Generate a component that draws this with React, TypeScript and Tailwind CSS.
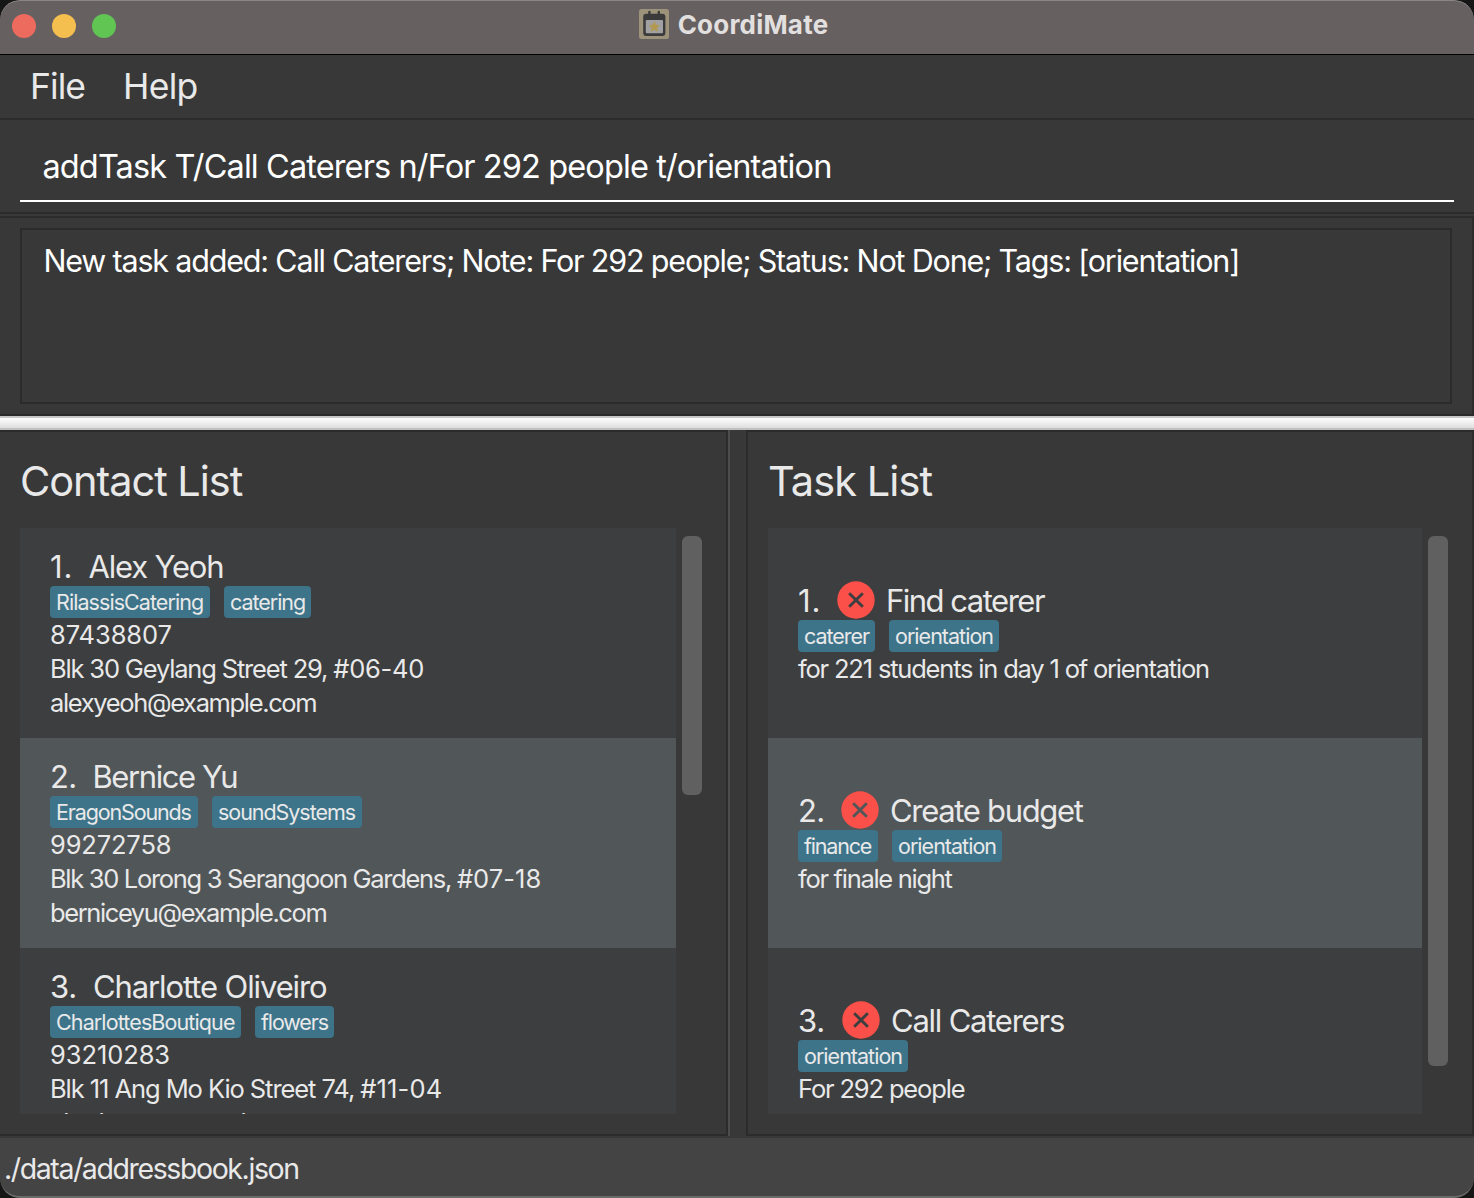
type Chip = { text: string; className: string; unit?: Chip }

type Contact = {
  index: Chip
  name: Chip
  tags: Chip[]
  lines: Chip[]
}

type Task = {
  index: Chip
  title: Chip
  tags: Chip[]
  note: Chip
}

const contacts: Contact[] = [
  {
    index: { text: '1.', className: 'w-[38.5px] tracking-[0.9px]' },
    name: { text: 'Alex Yeoh', className: 'tracking-[-1.2px]' },
    tags: [
      { text: 'RilassisCatering', className: 'w-[160px] tracking-[-0.94px]' },
      { text: 'catering', className: 'w-[87px] tracking-[-1.04px]' },
    ],
    lines: [
      { text: '87438807', className: 'tracking-[-0.08px]' },
      {
        text: 'Blk 30 Geylang Street 29, ',
        className: 'tracking-[-1.17px]',
        unit: { text: '#06-40', className: 'tracking-[-0.22px]' },
      },
      { text: 'alexyeoh@example.com', className: 'tracking-[-1.36px]' },
    ],
  },
  {
    index: { text: '2.', className: 'w-[42.5px] tracking-[-0.7px]' },
    name: { text: 'Bernice Yu', className: 'tracking-[-1.42px]' },
    tags: [
      { text: 'EragonSounds', className: 'w-[148px] tracking-[-1.14px]' },
      { text: 'soundSystems', className: 'w-[150px] tracking-[-1.05px]' },
    ],
    lines: [
      { text: '99272758', className: 'tracking-[-0.16px]' },
      {
        text: 'Blk 30 Lorong 3 Serangoon Gardens, ',
        className: 'tracking-[-1.31px]',
        unit: { text: '#07-18', className: 'tracking-[0.05px]' },
      },
      { text: 'berniceyu@example.com', className: 'tracking-[-1.4px]' },
    ],
  },
  {
    index: { text: '3.', className: 'w-[43px] tracking-[-0.3px]' },
    name: { text: 'Charlotte Oliveiro', className: 'tracking-[-1.11px]' },
    tags: [
      { text: 'CharlottesBoutique', className: 'w-[191px] tracking-[-0.89px]' },
      { text: 'flowers', className: 'w-[79px] tracking-[-1.14px]' },
    ],
    lines: [
      { text: '93210283', className: 'tracking-[-0.08px]' },
      {
        text: 'Blk 11 Ang Mo Kio Street 74, ',
        className: 'tracking-[-1.07px]',
        unit: { text: '#11-04', className: 'tracking-[0.15px]' },
      },
      { text: 'charlotte@example.com', className: 'tracking-[-1.38px]' },
    ],
  },
]

const tasks: Task[] = [
  {
    index: { text: '1.', className: 'w-[39px] tracking-[0.9px]' },
    title: { text: 'Find caterer', className: 'tracking-[-1.5px]' },
    tags: [
      { text: 'caterer', className: 'w-[77px] tracking-[-1.02px]' },
      { text: 'orientation', className: 'w-[110px] tracking-[-0.98px]' },
    ],
    note: { text: 'for 221 students in day 1 of orientation', className: 'tracking-[-1.19px]' },
  },
  {
    index: { text: '2.', className: 'w-[43px] tracking-[-0.7px]' },
    title: { text: 'Create budget', className: 'tracking-[-1.32px]' },
    tags: [
      { text: 'finance', className: 'w-[80px] tracking-[-1.2px]' },
      { text: 'orientation', className: 'w-[110px] tracking-[-0.98px]' },
    ],
    note: { text: 'for finale night', className: 'tracking-[-1.29px]' },
  },
  {
    index: { text: '3.', className: 'w-[44px] tracking-[-0.3px]' },
    title: { text: 'Call Caterers', className: 'tracking-[-1.23px]' },
    tags: [{ text: 'orientation', className: 'w-[110px] tracking-[-0.98px]' }],
    note: { text: 'For 292 people', className: 'tracking-[-1.16px]' },
  },
]

function CalendarIcon() {
  return (
    <svg width="30" height="30" viewBox="0 0 30 30">
      <rect width="30" height="30" rx="2.5" fill="#9c937a" />
      <rect x="4.2" y="4.8" width="22.2" height="22.2" rx="3" fill="#3b3b3b" />
      <rect x="9.2" y="1.8" width="2.4" height="5" rx="1.2" fill="#3b3b3b" />
      <rect x="18.6" y="1.8" width="2.4" height="5" rx="1.2" fill="#3b3b3b" />
      <rect x="6.8" y="11" width="17.2" height="13.2" rx="1" fill="#a1a1a3" />
      <path
        d="M15.4 12.6l1.5 3.4 3.6.4-2.7 2.4.8 3.6-3.2-1.9-3.2 1.9.8-3.6-2.7-2.4 3.6-.4z"
        fill="#b3984f"
        stroke="#b3984f"
        strokeWidth="0.6"
        strokeLinejoin="round"
      />
    </svg>
  )
}

function NotDoneIcon({ cross }: { cross: string }) {
  return (
    <svg width="38" height="38" viewBox="0 0 38 38" className="shrink-0">
      <circle cx="19" cy="19" r="18.7" fill="#fa5049" />
      <path d="M12.2 12.2L25.8 25.8M25.8 12.2L12.2 25.8" stroke={cross} strokeWidth="2.9" />
    </svg>
  )
}

function Tags({ tags }: { tags: Chip[] }) {
  return (
    <div className="flex h-8 gap-[14px]">
      {tags.map((tag) => (
        <span
          key={tag.text}
          className={`h-8 rounded-[4px] bg-[#3e7489] pl-[6px] text-[21.5px] leading-[33px] ${tag.className}`}
        >
          {tag.text}
        </span>
      ))}
    </div>
  )
}

function ContactCell({ contact, selected }: { contact: Contact; selected: boolean }) {
  return (
    <li className={`h-[210px] shrink-0 pt-5 pl-[30px] ${selected ? 'bg-[#515658]' : 'bg-[#3c3e3f]'}`}>
      <div className="mb-px flex text-[31px] leading-[37px]">
        <span className={contact.index.className}>{contact.index.text}</span>
        <span className={contact.name.className}>{contact.name.text}</span>
      </div>
      <Tags tags={contact.tags} />
      {contact.lines.map((line) => (
        <p key={line.text} className={`text-[25.5px] leading-[34px] ${line.className}`}>
          {line.text}
          {line.unit && <span className={line.unit.className}>{line.unit.text}</span>}
        </p>
      ))}
    </li>
  )
}

function TaskCell({ task, selected }: { task: Task; selected: boolean }) {
  return (
    <li className={`h-[210px] shrink-0 pt-[53px] pl-[30px] ${selected ? 'bg-[#515658]' : 'bg-[#3c3e3f]'}`}>
      <div className="mb-px flex h-[38px] items-start text-[31px] leading-[40px]">
        <span className={task.index.className}>{task.index.text}</span>
        <NotDoneIcon cross={selected ? '#515658' : '#3c3e3f'} />
        <span className={`ml-[11px] ${task.title.className}`}>{task.title.text}</span>
      </div>
      <Tags tags={task.tags} />
      <p className={`text-[25.5px] leading-[34px] ${task.note.className}`}>{task.note.text}</p>
    </li>
  )
}

export default function App() {
  return (
    <div className="h-[1198px] w-[1474px] bg-[#161616]">
      <div className="flex h-[1198px] flex-col overflow-hidden rounded-[20px] bg-[#383838] font-['Inter',sans-serif] whitespace-nowrap text-[#e9e9e9]">
        <header className="grid h-[55px] shrink-0 grid-cols-[1fr_auto_1fr] items-start rounded-t-[20px] border-b border-black bg-[#666160] shadow-[inset_0_1px_0_#8a8685]">
          <div className="flex gap-4 pt-[14px] pl-3">
            <span className="size-6 rounded-full bg-[#ed6a5e]" />
            <span className="size-6 rounded-full bg-[#f5bf4f]" />
            <span className="size-6 rounded-full bg-[#61c554]" />
          </div>
          <div className="flex gap-[9px] pt-[9px] pr-[7px]">
            <CalendarIcon />
            <h1 className="text-[26px] leading-8 font-bold tracking-[0.21px] text-[#e2dfdf]">CoordiMate</h1>
          </div>
        </header>

        <nav className="flex h-[65px] shrink-0 border-b-2 border-[#2b2b2b] pl-[30px] text-[35.5px] leading-[64px]">
          <span className="w-[93px] tracking-[-0.95px]">File</span>
          <span className="tracking-[-0.7px]">Help</span>
        </nav>

        <div className="h-[94px] shrink-0 border-b-2 border-[#2b2b2b] px-5 text-white">
          <div className="h-[82px] border-b-2 border-white pt-[13px] pl-[22.5px] text-[32.5px] leading-[68px] tracking-[-0.89px]">
            addTask T/Call Caterers n/For 292 people t/orientation
          </div>
        </div>

        <section className="mt-0.5 h-[200px] shrink-0 border-y-2 border-r-2 border-[#2b2b2b] pt-[10px] pr-5 pl-5 text-white">
          <div className="h-[176px] border-2 border-[#2b2b2b] pl-[21.5px] text-[30.5px] leading-[61px] tracking-[-1.18px]">
            New task added: Call Caterers; Note: For 292 people; Status: Not Done; Tags: [orientation]
          </div>
        </section>

        <div className="h-[14px] shrink-0 border-y-2 border-t-[#c8c8c8] border-b-[#c0c0c0] bg-linear-to-b from-white to-[#dedede]" />

        <main className="flex h-[706px] shrink-0">
          <section className="w-[728px] border-y-2 border-r-2 border-[#2b2b2b] pl-5">
            <h2 className="h-24 text-[41.5px] leading-[98px] tracking-[-1.05px]">Contact List</h2>
            <div className="flex gap-[6px]">
              <ul className="flex h-[586px] w-[656px] flex-col overflow-hidden">
                {contacts.map((contact, i) => (
                  <ContactCell key={contact.name.text} contact={contact} selected={i === 1} />
                ))}
              </ul>
              <div className="mt-2 h-[259px] w-5 rounded-[6px] bg-[#606060]" />
            </div>
          </section>
          <div className="w-[18px] border-l-2 border-[#4d4d4d]" />
          <section className="w-[728px] border-2 border-[#2b2b2b] pl-5">
            <h2 className="h-24 text-[41.5px] leading-[98px] tracking-[-0.92px]">Task List</h2>
            <div className="flex gap-[6px]">
              <ul className="flex h-[586px] w-[654px] flex-col overflow-hidden">
                {tasks.map((task, i) => (
                  <TaskCell key={task.title.text} task={task} selected={i === 1} />
                ))}
              </ul>
              <div className="mt-2 h-[530px] w-5 rounded-[6px] bg-[#606060]" />
            </div>
          </section>
        </main>

        <footer className="mt-0.5 h-[60px] shrink-0 rounded-b-[20px] border-b-2 border-[#6b6b6b] bg-[#444444] pl-1 text-[28.5px] leading-[62px] tracking-[-1.4px]">
          ./data/addressbook.json
        </footer>
      </div>
    </div>
  )
}
